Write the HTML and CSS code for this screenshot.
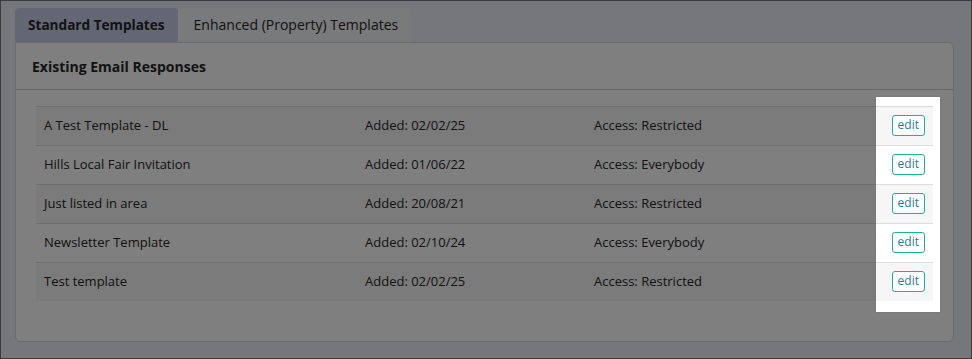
FILE: index.html
```html
<!DOCTYPE html>
<html lang="en">
<head>
    <meta charset="UTF-8">
    <meta name="viewport" content="width=device-width, initial-scale=1.0">
    <title>Email Responses</title>
    <link rel="stylesheet" href="styles.css">
</head>
<body>
    <div class="page">
        <ul class="tabs">
            <li class="tab active">Standard Templates</li>
            <li class="tab">Enhanced (Property) Templates</li>
        </ul>
        <div class="panel">
            <div class="panel-title">Existing Email Responses</div>
            <div class="panel-body">
                <table class="responses">
                    <tr>
                        <td class="c-name">A Test Template - DL</td>
                        <td class="c-added">Added: 02/02/25</td>
                        <td class="c-access">Access: Restricted</td>
                        <td class="c-edit"><button class="btn-edit">edit</button></td>
                    </tr>
                    <tr>
                        <td class="c-name">Hills Local Fair Invitation</td>
                        <td class="c-added">Added: 01/06/22</td>
                        <td class="c-access">Access: Everybody</td>
                        <td class="c-edit"><button class="btn-edit">edit</button></td>
                    </tr>
                    <tr>
                        <td class="c-name">Just listed in area</td>
                        <td class="c-added">Added: 20/08/21</td>
                        <td class="c-access">Access: Restricted</td>
                        <td class="c-edit"><button class="btn-edit">edit</button></td>
                    </tr>
                    <tr>
                        <td class="c-name">Newsletter Template</td>
                        <td class="c-added">Added: 02/10/24</td>
                        <td class="c-access">Access: Everybody</td>
                        <td class="c-edit"><button class="btn-edit">edit</button></td>
                    </tr>
                    <tr>
                        <td class="c-name">Test template</td>
                        <td class="c-added">Added: 02/02/25</td>
                        <td class="c-access">Access: Restricted</td>
                        <td class="c-edit"><button class="btn-edit">edit</button></td>
                    </tr>
                </table>
            </div>
        </div>
    </div>
    <!-- tour highlight over the edit column -->
    <div class="spotlight"></div>
</body>
</html>
```

FILE: styles.css
```css
html, body {
    margin: 0;
    padding: 0;
}
body {
    font-family: "Open Sans", "Liberation Sans", sans-serif;
    font-size: 13px;
    color: #262626;
    background: #edeff6;
    width: 972px;
    height: 359px;
    overflow: hidden;
    position: relative;
}
.page {
    box-sizing: border-box;
    height: 359px;
    border: 1px solid #767676;
    padding: 7px 17px 0 14px;
}
.tabs {
    list-style: none;
    margin: 0;
    padding: 0;
    display: flex;
}
.tab {
    height: 34px;
    line-height: 34px;
    padding: 0 13px 0 16px;
    font-size: 14px;
    border-radius: 4px 4px 0 0;
    background: #f3f4f8;
}
.tab.active {
    background: #c6cee6;
    font-weight: bold;
    font-size: 13.6px;
    padding: 0 13px;
}
.panel {
    background: #fff;
    border: 1px solid #d6d6d6;
    border-radius: 0 6px 6px 6px;
    height: 298px;
}
.panel-title {
    height: 46px;
    line-height: 48px;
    padding: 0 16px;
    font-size: 14px;
    font-weight: bold;
    border-bottom: 1px solid #cfcfcf;
}
.panel-body {
    padding: 16px 20px 0 20px;
}
.responses {
    width: 100%;
    border-collapse: collapse;
}
.responses td {
    border-top: 1px solid #dcdcdc;
    height: 36px;
    padding: 0 8px 2px;
    vertical-align: middle;
}
.responses tr:nth-child(odd) td {
    background: #f6f6f6;
}
.c-name {
    width: 305px;
}
.c-added {
    width: 213px;
}
.c-edit {
    text-align: right;
}
.btn-edit {
    font-family: inherit;
    font-size: 12px;
    color: #267d8e;
    background: #fff;
    border: 1px solid #1ab394;
    border-radius: 3px;
    padding: 0 5px;
    height: 21px;
    line-height: 18px;
    cursor: pointer;
}
.spotlight {
    position: absolute;
    left: 876px;
    top: 97px;
    width: 64px;
    height: 215px;
    box-shadow: 0 0 1px 1px rgba(120, 120, 120, 0.5), 0 0 0 3000px rgba(0, 0, 0, 0.5);
}
```
